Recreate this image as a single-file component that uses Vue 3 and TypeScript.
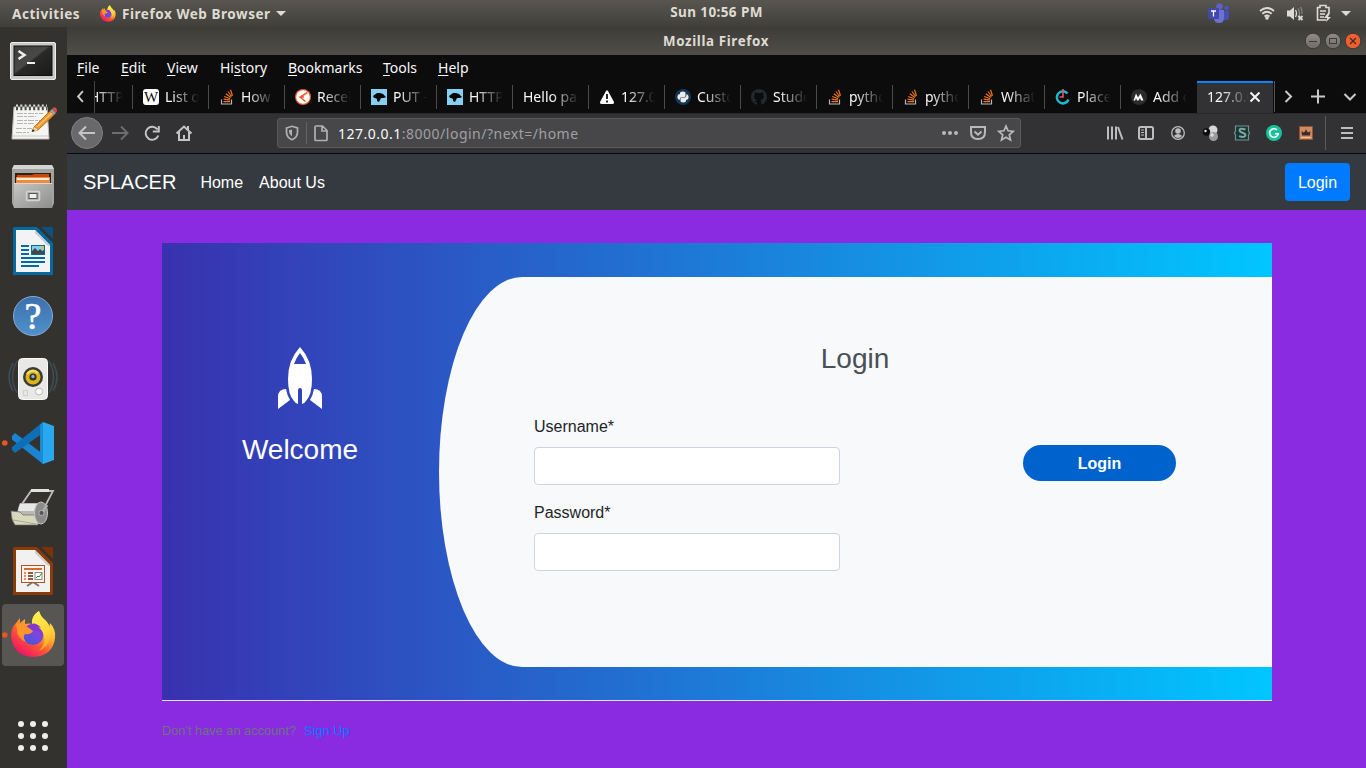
<script setup lang="ts">
import { ref } from 'vue'

interface MenuEntry { pre: string; key: string; post: string; width: number }
interface BrowserTab { icon: string; label: string }

const menus: MenuEntry[] = [
  { pre: '', key: 'F', post: 'ile', width: 44 },
  { pre: '', key: 'E', post: 'dit', width: 46 },
  { pre: '', key: 'V', post: 'iew', width: 53 },
  { pre: 'Hi', key: 's', post: 'tory', width: 68 },
  { pre: '', key: 'B', post: 'ookmarks', width: 95 },
  { pre: '', key: 'T', post: 'ools', width: 55 },
  { pre: '', key: 'H', post: 'elp', width: 50 },
]

const tabs: BrowserTab[] = [
  { icon: 'mdn', label: 'HTTP' },
  { icon: 'wiki', label: 'List of' },
  { icon: 'stack', label: 'How t' },
  { icon: 'postman', label: 'Recei' },
  { icon: 'mdn', label: 'PUT - H' },
  { icon: 'mdn', label: 'HTTP' },
  { icon: '', label: 'Hello pag' },
  { icon: 'warn', label: '127.0.' },
  { icon: 'python', label: 'Custo' },
  { icon: 'github', label: 'Stude' },
  { icon: 'stack', label: 'python' },
  { icon: 'stack', label: 'python' },
  { icon: 'stack', label: 'What i' },
  { icon: 'clock', label: 'Place' },
  { icon: 'medium', label: 'Add c' },
]

const username = ref('')
const password = ref('')
</script>

<template>
  <div class="desktop">
    <header class="topbar">
      <span class="activities">Activities</span>
      <svg class="ff-small" viewBox="11 8 45 46"><use href="#firefox" /></svg>
      <span class="appname">Firefox Web Browser</span>
      <i class="caret"></i>
      <span class="clock">Sun 10:56 PM</span>
      <svg class="tray" width="158" height="27" viewBox="1208 0 158 27">
        <circle cx="1219.500" cy="6.500" r="3.300" fill="#5a62c3" />
        <circle cx="1226.500" cy="8" r="2.400" fill="#4b53bc" />
        <path d="M1223 11h6v6q0 3-3 3h-3z" fill="#4650b4" />
        <path d="M1214 10h10v8q0 5-5 5t-5-5z" fill="#6b72d0" />
        <rect x="1208" y="8" width="11" height="11" rx="1" fill="#4149ad" />
        <path d="M1211 11h5M1213.500 11v5.500" stroke="#fff" stroke-width="1.300" />
        <g fill="none" stroke="#dedbd5" stroke-width="1.800">
          <path d="M1260 11q7-6 14 0M1262.300 13.800q4.700-4 9.400 0M1264.500 16.500q2.500-2 5 0" />
          <path d="M1295.500 10q2 3 0 7" stroke-width="1.300" />
          <path d="M1298 8.500q3 4.500 0 9M1300.500 7q2 3.500 1.500 7" stroke-width="1.300" opacity=".4" />
          <path d="M1298.500 16l4 4m0-4l-4 4" stroke-width="1.800" />
        </g>
        <circle cx="1267" cy="18" r="1.800" fill="#dedbd5" />
        <path d="M1287 10.500h3l4-3.500v13l-4-3.500h-3z" fill="#dedbd5" />
        <path d="M1326 20h-8.500V7.500h2.500v-2h6v2h3V13M1320 11h6M1320 14h5M1320 17h4" fill="none" stroke="#dedbd5" stroke-width="1.600" />
        <path d="M1328 13l-4 5h3l-1 4 5-5h-3l2-4z" fill="#dedbd5" />
        <path d="M1341 11h10l-5 5z" fill="#dedbd5" />
      </svg>
    </header>

    <div class="workspace">
      <aside class="dock">
        <svg class="launcher" viewBox="0 0 67 64">
          <defs>
            <linearGradient id="screen" x1="0" y1="0" x2="1" y2="1"><stop offset="0" stop-color="#3d3e3b" /><stop offset=".45" stop-color="#494a48" /><stop offset=".5" stop-color="#292a28" /><stop offset="1" stop-color="#181918" /></linearGradient>
          </defs>
          <rect x="10.500" y="15.500" width="45" height="37" rx="1.500" fill="#c9c9c7" stroke="#ededeb" />
          <rect x="14" y="19" width="38" height="29.500" fill="url(#screen)" stroke="#111" />
          <path d="M18.500 24l6 4-6 4" fill="none" stroke="#eee" stroke-width="2.500" />
          <path d="M27 36h8" stroke="#eee" stroke-width="2" />
        </svg>

        <svg class="launcher" viewBox="0 0 67 64">
          <path d="M14 16h33l2 32H12z" fill="#f5f5f3" stroke="#bdbdb8" />
          <path d="M12.500 45h36" stroke="#c9c9c4" />
          <g stroke="#b5b5b2" stroke-width="1" stroke-dasharray="6 1 3 1"><path d="M17 22.500h26M17 25.500h19M17 29.500h23M17 32.500h17M16 37.500h16M16 41.500h13" /></g>
          <path d="M16 17.500h31" stroke="#4a4a48" stroke-width="3.500" stroke-dasharray="2 2.300" />
          <path d="M16 14.500h31" stroke="#dadad8" stroke-width="2" stroke-dasharray="2 2.300" />
          <path d="M34 36L50 20l4 4-16 15-6 1.500z" fill="#f0952a" stroke="#a85f14" stroke-width=".8" />
          <path d="M37 36l15-14" stroke="#ffc77a" stroke-width="1.200" />
          <path d="M34 36l4 3-6 2z" fill="#f1d5a5" /><path d="M33 38l1.600 2-2.900 1z" fill="#222" />
          <path d="M50 20l2-2 4 4-2 2z" fill="#9aa3a8" /><path d="M52 18q2-3 4-1t0 5z" fill="#e04848" />
        </svg>

        <svg class="launcher" viewBox="0 0 67 64">
          <defs><linearGradient id="cab" x2="1" y2="1"><stop stop-color="#c6c6c4" /><stop offset="1" stop-color="#8e8e8c" /></linearGradient></defs>
          <path d="M14 10h38l2 4v34l-2 5H14l-2-5V14z" fill="#a3a3a1" />
          <path d="M14 10h38l2 4H12z" fill="#d4d4d2" />
          <rect x="15" y="18" width="36" height="11" fill="#2a211c" />
          <path d="M17 20h15l2-1h15v8H17z" fill="#c64a0c" />
          <path d="M16 22h34v7H16z" fill="#f08a3e" /><path d="M17 24h32" stroke="#fff0dc" stroke-width="2" />
          <rect x="14" y="28" width="38" height="25" rx="1" fill="url(#cab)" />
          <path d="M14 28.500h38" stroke="#d8d8d6" />
          <rect x="26.500" y="36.500" width="13" height="9" rx="1" fill="#aaa" stroke="#d3d3d1" stroke-width="1.500" />
          <rect x="29" y="38.500" width="8" height="5" fill="#f0f0ee" stroke="#555" />
        </svg>

        <svg class="launcher" viewBox="0 0 67 64">
          <path d="M15 8h22l16 16v32H13V10q0-2 2-2z" fill="#0369a3" />
          <path d="M41 8h12v12z" fill="#0e5180" />
          <path d="M16 11h19l15 15v27H16z" fill="#f3f3f3" />
          <path d="M35 11v3l13 13h2v-1z" fill="#c5cdd2" />
          <path d="M21 27h8M21 31h8M21 35h8M21 39h24M21 43h24M21 47h18" stroke="#0369a3" stroke-width="2" />
          <rect x="31.500" y="26.500" width="13" height="9" fill="#87cdec" stroke="#0369a3" />
          <path d="M32 35v-3l3-3 3 3 2-2 2 2 2-1v4z" fill="#3c4b4d" /><circle cx="42.500" cy="28.500" r="1.500" fill="#e9bd32" />
        </svg>

        <svg class="launcher" viewBox="0 0 67 64">
          <defs><linearGradient id="help" x2="0" y2="1"><stop stop-color="#3c6fad" /><stop offset="1" stop-color="#4f92cb" /></linearGradient></defs>
          <circle cx="33" cy="33" r="19.500" fill="url(#help)" stroke="#86acd6" />
          <text x="33" y="46" class="question">?</text>
        </svg>

        <svg class="launcher" viewBox="0 0 67 64">
          <g fill="none" stroke="#3f4c5a" stroke-width="1.500"><path d="M17 14q-9 16 0 32M13 16q-8 14 0 28M49 14q9 16 0 32M53 16q8 14 0 28" /></g>
          <rect x="18.500" y="11.500" width="29" height="41" rx="4" fill="#e8e8e6" stroke="#fafaf9" />
          <circle cx="33" cy="30" r="10" fill="#3b3b36" /><circle cx="33" cy="30" r="7.500" fill="#d8b51e" />
          <path d="M27 27q5-6 11-1" stroke="#f4df62" stroke-width="2" fill="none" />
          <circle cx="33" cy="30" r="3.600" fill="#333" /><circle cx="33" cy="29.500" r="1.700" fill="#aaa" />
          <circle cx="39" cy="44.500" r="3.500" fill="#f9f9f9" stroke="#bbb" /><rect x="23.500" y="43.500" width="4" height="5" fill="none" stroke="#d0d0ce" />
        </svg>

        <svg class="launcher" viewBox="0 0 67 64">
          <circle cx="4.800" cy="32" r="2.800" fill="#e95420" />
          <path d="M12 25l3-3 28 21v10L12 28.500z" fill="#1b83cf" />
          <path d="M12 39l3 3 28-20V11L12 36z" fill="#0f6fb5" />
          <path d="M43 11l11 4v34l-11 4z" fill="#29a7f1" />
          <path d="M43 11v42l-3-3V14z" fill="#1b8bd5" />
        </svg>

        <svg class="launcher" viewBox="0 0 67 64">
          <path d="M22 29l9-13h22l-11 21" fill="none" stroke="#bcbcb8" stroke-width="1.800" />
          <path d="M31 15.500h18" stroke="#e1e1df" stroke-width="3" />
          <path d="M20 28h22l-2 21H21q-7-7-1-21z" fill="#b8b9b4" />
          <path d="M20 29h18l-4 7H18z" fill="#e7e7e5" />
          <path d="M11 36l9 1 3 3h15v10H15q-4-5-4-14z" fill="#d8d8bf" stroke="#6b6b5b" stroke-width=".7" />
          <path d="M13 45l23 4" stroke="#aaaa90" />
          <ellipse cx="41" cy="38" rx="6.500" ry="11" fill="#8b8c89" stroke="#c4c4c1" />
          <path d="M42 38l5-8" stroke="#aaa" stroke-width="3" /><circle cx="41.500" cy="38" r="2.600" fill="#575856" stroke="#ccc" stroke-width=".7" />
        </svg>

        <svg class="launcher" viewBox="0 0 67 64">
          <path d="M15 8h22l16 16v32H13V10q0-2 2-2z" fill="#8c3a08" />
          <path d="M41 8h12v12z" fill="#7b3206" />
          <path d="M16 11h19l15 15v27H16z" fill="#f1f1f1" />
          <path d="M35 11v3l13 13h2v-1z" fill="#d0c9c5" />
          <path d="M27 47l6-4 6 4" fill="none" stroke="#777" stroke-width="2" />
          <rect x="21.500" y="26.500" width="23" height="17" fill="#fff4ed" stroke="#b2541f" />
          <path d="M24 30h18" stroke="#d36c31" stroke-width="2" />
          <path d="M24 34h2M24 37h2M24 40h2" stroke="#d36c31" stroke-width="1.500" /><path d="M28 34h5M28 37h5M28 40h5" stroke="#6c2a08" stroke-width="1.500" />
          <rect x="35" y="33.500" width="7" height="7" fill="#fff" stroke="#888" /><path d="M36 39l2-2 1 1 3-4" stroke="#239333" fill="none" />
        </svg>

        <svg class="launcher" viewBox="0 0 67 64">
          <defs>
            <linearGradient id="flame" x1=".85" y1=".1" x2=".25" y2=".95"><stop stop-color="#fff04d" /><stop offset=".35" stop-color="#ffb62d" /><stop offset=".65" stop-color="#ff5634" /><stop offset="1" stop-color="#f01567" /></linearGradient>
            <linearGradient id="globe" x1=".8" y1="0" x2=".3" y2="1"><stop stop-color="#a438d8" /><stop offset=".6" stop-color="#6c4be0" /><stop offset="1" stop-color="#4658d2" /></linearGradient>
            <linearGradient id="tail" x1=".4" y1="0" x2=".6" y2="1"><stop stop-color="#fff250" /><stop offset=".6" stop-color="#ffd338" /><stop offset="1" stop-color="#ff9a25" /></linearGradient>
          </defs>
          <rect x="2" y="1" width="62" height="62" rx="4" fill="#575652" />
          <circle cx="4.800" cy="32" r="2.800" fill="#e95420" />
          <g id="firefox">
            <path d="M16 20l4-5v5l5-4v5q4-1 7 0-1-8 7-13 1 5 6 9 4 3 4 8l1-5q6 6 5 15-2 18-22 19-20-1-22-21 0-8 5-13z" fill="url(#flame)" />
            <circle cx="33" cy="31.500" r="10.500" fill="url(#globe)" />
            <path d="M39 8q1 5 6 9 7 7 6 17-2 9-12 14 7-7 5-15-2-9-12-11-1-9 7-14z" fill="url(#tail)" />
            <path d="M16 20q3 1 7 1 6 4 10 7-3 4-8 3-3 3 1 8-9-4-9-12 0-4-1-7z" fill="#ff962b" />
            <path d="M27 23q8-6 14 2l-3-1q5 4 5 9-3-6-10-6z" fill="#8339cd" />
          </g>
        </svg>

        <div class="apps"><i v-for="n in 9" :key="n"></i></div>
      </aside>

      <section class="window">
        <div class="titlebar">
          <span>Mozilla Firefox</span>
          <svg class="winctl" width="60" height="28" viewBox="1303 27 60 28">
            <defs><linearGradient id="btn" x2="0" y2="1"><stop stop-color="#8f8d84" /><stop offset="1" stop-color="#6d6b64" /></linearGradient></defs>
            <circle cx="1313" cy="41" r="7.800" fill="url(#btn)" stroke="#3a3935" /><circle cx="1333" cy="41" r="7.800" fill="url(#btn)" stroke="#3a3935" /><circle cx="1353" cy="41" r="7.800" fill="#ee5f32" stroke="#3a3935" />
            <path d="M1309 41.500h8" stroke="#3c3b37" /><rect x="1329.500" y="38.500" width="7" height="5" fill="none" stroke="#3c3b37" /><path d="M1350 38l6 6m0-6l-6 6" stroke="#4b2a1b" stroke-width="1.300" />
          </svg>
        </div>

        <nav class="menubar">
          <span v-for="m in menus" :key="m.post" :style="{ width: m.width + 'px' }">{{ m.pre }}<u>{{ m.key }}</u>{{ m.post }}</span>
        </nav>

        <div class="tabbar">
          <svg class="scroll-left" width="28" height="32" viewBox="67 81 28 32"><path d="M83.500 91l-5 5.500 5 5.500" fill="none" stroke="#c9c9cb" stroke-width="2" /></svg>
          <div class="tabs">
            <div v-for="(t, i) in tabs" :key="i" class="tab">
              <svg v-if="t.icon" width="16" height="16" viewBox="0 0 16 16">
                <g v-if="t.icon === 'mdn'"><rect width="16" height="16" fill="#83d0f2" /><path d="M2 7l2-1.500 2-1.500h3l3 1 3 3-2 1-3 0-1 2-1 2-2-1v-2l-2-1H3z" fill="#050505" /></g>
                <g v-else-if="t.icon === 'wiki'"><rect width="16" height="16" rx="3" fill="#fff" /><text x="8" y="13" class="wiki-w">W</text></g>
                <g v-else-if="t.icon === 'stack'" fill="none"><path d="M2.500 10.500v4.500h10v-4.500" stroke="#b4b7ba" stroke-width="1.200" /><path d="M4.500 12.700h6.500M4.600 10.200l6.400.9M5.200 7.500l6 2.200M6.800 4.700l5.200 3.800M9 2.500l3.700 5M11.500.7l2 6" stroke="#ef7320" stroke-width="1.200" /></g>
                <g v-else-if="t.icon === 'postman'"><circle cx="8" cy="8" r="8" fill="#f05c35" /><circle cx="8" cy="8" r="6.800" fill="#fff" /><path d="M12.500 3.500L5 8l5.500 4.500M5 8h4" fill="none" stroke="#ef5b34" stroke-width="1.500" /></g>
                <g v-else-if="t.icon === 'warn'"><path d="M7 2q1-1.500 2 0l6 11q.5 2-1.500 2H2.500Q.5 15 1 13z" fill="#fafafa" /><path d="M8 5v5M8 11.500v2" stroke="#111" stroke-width="1.800" /></g>
                <g v-else-if="t.icon === 'python'"><circle cx="8" cy="8" r="8" fill="#173650" /><path d="M5 5V3.500Q8 1.500 10.500 3.500V7q0 1-1 1H6.500q-1.500 0-2 3-2.500-1-2-4 .5-2 2.500-2zM11 11v1.500q-3 2-5.500 0V9.500q0-1 1-1h3q2 0 2-3.500 2.500 1 2 4-.5 2-2.500 2z" fill="#e8edf0" /></g>
                <g v-else-if="t.icon === 'github'"><circle cx="8" cy="8" r="8" fill="#24292e" /><path d="M4 3l2 1h4l2-1 .4 3q1.500 4-2.900 5 1 1 .5 5h-4v-3q-2 .5-3-1 2 .5 3-1-4-1-2.500-5z" fill="#0b0b0c" /></g>
                <g v-else-if="t.icon === 'clock'" fill="none"><path d="M12.500 4.500A6 6 0 1 0 13.500 10.500" stroke="#1db8d0" stroke-width="2.500" /><path d="M8 0v8H4.500" stroke="#e85368" stroke-width="1.600" /></g>
                <g v-else><circle cx="8" cy="8" r="8" fill="#2b2b2b" /><path d="M2.500 11.500L5 4.500l2 4 2.500-4 3 7H10L9 9l-1.500 2.500H6L5 9l-.8 2.500z" fill="#fff" /></g>
              </svg>
              <span>{{ t.label }}</span>
            </div>
            <div class="tab active"><span>127.0.0</span>
              <svg width="12" height="12" viewBox="0 0 12 12"><path d="M1.500 1.500l9 9m0-9l-9 9" stroke="#f5f5f5" stroke-width="2" /></svg>
            </div>
          </div>
          <svg class="tab-tools" width="92" height="32" viewBox="1274 81 92 32"><path d="M1274.500 81v31" stroke="#555" /><path d="M1285.500 91l5.500 5.500-5.500 5.500M1318 89.500v14M1311 96.500h14M1344.500 94l5.500 5.500 5.500-5.500" fill="none" stroke="#c9c9cb" stroke-width="2" /></svg>
        </div>

        <div class="toolbar">
          <svg width="134" height="40" viewBox="67 113 134 40" fill="none" stroke="#c4c4c6" stroke-width="2">
            <circle cx="87" cy="133" r="15.500" fill="#69696b" stroke="#818183" stroke-width="1" />
            <path d="M95 133H80M86 126.500L79.500 133l6.500 6.500" />
            <path d="M112 133h15M121 126.500l6.500 6.500-6.500 6.500" stroke="#6d6d70" />
            <path d="M157.500 129.500a6.500 6.500 0 1 0 .8 6M158.800 126v5.500h-6" />
            <path d="M176.500 133.500l7.500-7 7.500 7M179 132v8h10v-8M184 140v-5" />
            <path d="M188 126v4" />
          </svg>
          <div class="urlbar">
            <svg width="55" height="28" viewBox="278 119 55 28" fill="none" stroke="#b1b1b3" stroke-width="1.700">
              <path d="M286.500 128l5.500-1.700 5.500 1.700v4q0 5.500-5.500 7.700-5.500-2.200-5.500-7.700z" /><path d="M292 129.500v7q-3-2-3-5v-1.200z" fill="#b1b1b3" stroke="none" />
              <path d="M306.500 122v22" stroke="#646466" stroke-width="1" />
              <path d="M316 126h6.500l4.500 4.500v9q0 1-1 1h-10q-1 0-1-1V127q0-1 1-1zM322 126.500v4.500h5" />
            </svg>
            <span class="url"><b>127.0.0.1</b>:8000/login/?next=/home</span>
            <svg class="url-tools" width="86" height="28" viewBox="935 119 86 28" fill="none" stroke="#b9b9bb" stroke-width="2">
              <g fill="#b9b9bb" stroke="none"><circle cx="944" cy="133" r="2" /><circle cx="950" cy="133" r="2" /><circle cx="956" cy="133" r="2" /></g>
              <path d="M971 127h14v5q0 7-7 7t-7-7z" /><path d="M974.500 131.500l3.500 3.200 3.500-3.200" />
              <path d="M1006 126l2.100 4.800 5.100.5-3.900 3.500 1.200 5.200-4.500-2.800-4.500 2.800 1.200-5.200-3.900-3.500 5.100-.5z" stroke-width="1.700" />
            </svg>
          </div>
          <svg class="extensions" width="268" height="40" viewBox="1098 113 268 40" fill="none" stroke="#bdbdbf" stroke-width="2">
            <path d="M1108 126.500v13M1112 126.500v13M1116 126.500v13M1118 127l4.500 12.500" />
            <rect x="1139" y="127" width="14" height="12" rx="1.500" /><path d="M1146 127v12" /><path d="M1141 130h3M1141 132.500h3M1141 135h3" stroke-width="1" />
            <circle cx="1178" cy="133" r="6.300" stroke-width="1.300" /><circle cx="1178" cy="131" r="2.800" fill="#bdbdbf" stroke="none" /><path d="M1173.800 136q4.200-4 8.400 0-4.200 4-8.400 0z" fill="#bdbdbf" stroke="none" />
            <g stroke="none"><circle cx="1213" cy="130" r="4.500" fill="#d7d7d7" /><circle cx="1206.500" cy="132" r="3.700" fill="#0c0c0c" /><circle cx="1205.500" cy="131" r="1.200" fill="#eee" /><circle cx="1213.500" cy="136.500" r="4.500" fill="#9b9b9b" /><circle cx="1212" cy="135" r="1.800" fill="#ddd" /></g>
            <path d="M1235.500 126h13v5l1 2-1 2v5h-13v-5l-1-2 1-2z" fill="#183635" stroke="#6f9390" stroke-width="1.200" /><path d="M1245.500 129.500q-6-2-6 .8c0 3 6 2 6 4.800q0 3-6.500 1" stroke="#84a5a2" />
            <circle cx="1274" cy="133" r="8" fill="#15c39a" stroke="none" /><path d="M1277 130a4.300 4.300 0 1 0 1.200 3.800h-3.400" stroke="#fff" stroke-width="1.600" />
            <rect x="1299.500" y="126.500" width="13" height="13" fill="#d18b60" stroke="#925332" stroke-width="1" /><path d="M1301.500 131l2 1.500 1.500-1 1-2.500 1 2.500 1.500 1 2-1.500-.5 4.500h-8z" fill="#3e2a26" stroke="none" /><path d="M1301 137.500h10" stroke="#f1c39c" stroke-width="1" />
            <path d="M1325.500 116v34" stroke="#5b5b5e" stroke-width="1" /><path d="M1341 128h12M1341 133h12M1341 138h12" />
          </svg>
        </div>

        <div class="page">
          <nav class="site-nav">
            <a class="brand">SPLACER</a><a>Home</a><a>About Us</a>
            <button class="nav-login">Login</button>
          </nav>
          <main>
            <div class="register">
              <div class="welcome">
                <svg width="44" height="62" viewBox="0 0 44 62" fill="#fff">
                  <path fill-rule="evenodd" d="M22 0Q34 13 34 32q0 16-6 22-2 3-4 3V43q0-2-2-2t-2 2v14q-2 0-4-3-6-6-6-22Q10 13 22 0zM22 6q-4 5-6 11h12Q26 11 22 6z" />
                  <path d="M8 42Q0 42 0 50v12l12-9Q9 48 8 42zM36 42q8 0 8 8v12l-12-9q3-5 4-11z" />
                </svg>
                <h3>Welcome</h3>
              </div>
              <div class="panel">
                <h3>Login</h3>
                <form class="fields" @submit.prevent>
                  <div class="inputs">
                    <label for="user">Username*</label>
                    <input id="user" v-model="username" type="text" />
                    <label for="pass">Password*</label>
                    <input id="pass" v-model="password" type="password" />
                  </div>
                  <button class="submit">Login</button>
                </form>
              </div>
            </div>
            <p class="signup">Don't have an account?<a>Sign Up</a></p>
          </main>
        </div>
      </section>
    </div>
  </div>
</template>

<style>
body { margin: 0; overflow: hidden; }
</style>

<style scoped>
* { box-sizing: border-box; }
svg { display: block; flex: none; }
.desktop { width: 1366px; height: 768px; display: flex; flex-direction: column; overflow: hidden; font-family: "Noto Sans", "Open Sans", sans-serif; font-size: 14px; }
.topbar { position: relative; height: 27px; display: flex; align-items: center; padding-left: 12px; background: linear-gradient(#58564f, #403f3a); color: #dfdbd2; font-weight: 700; font-size: 13.5px; letter-spacing: .55px; white-space: nowrap; }
.activities { width: 88px; }
.ff-small { width: 16px; height: 17px; margin-bottom: 1px; }
.appname { margin-left: 6px; width: 149px; }
.caret { border: 5px solid transparent; border-top-color: #dfdbd2; border-bottom: 0; margin-left: 5px; }
.clock { position: absolute; left: 0; right: 0; top: 3px; text-align: center; padding-left: 67px; letter-spacing: .4px; }
.tray { margin-left: auto; }
.workspace { flex: 1; min-height: 0; display: flex; }
.dock { width: 67px; background: #33322e; display: flex; flex-direction: column; }
.launcher { width: 67px; height: 64px; }
.question { font: 400 38px "Liberation Serif", serif; fill: #fff; stroke: #fff; stroke-width: .6px; text-anchor: middle; }
.apps { margin: 54px 0 0 18px; display: grid; grid-template-columns: repeat(3, 6px); gap: 6px; }
.apps i { width: 6px; height: 6px; border-radius: 50%; background: #eeeeec; }
.window { flex: 1; min-width: 0; display: flex; flex-direction: column; }
.titlebar { height: 28px; display: grid; grid-template-columns: 60px 1fr 60px; align-items: center; padding-right: 3px; background: linear-gradient(#3d3c38, #4f4e48); color: #dfdbd2; font-weight: 700; font-size: 13.3px; letter-spacing: .65px; }
.titlebar span { grid-column: 2; text-align: center; padding-left: 2px; }
.menubar { height: 26px; padding: 0 0 2px 10px; display: flex; align-items: center; background: #0c0c0d; color: #f9f9fa; white-space: nowrap; }
.menubar u { text-underline-offset: 2px; text-decoration-thickness: 1px; }
.tabbar { height: 32px; display: flex; background: #0c0c0d; }
.scroll-left { border-right: 1px solid #444; }
.tabs { width: 1178px; margin-right: 1px; overflow: hidden; display: flex; justify-content: flex-end; }
.tab { width: 76px; flex: none; padding: 0 10px; display: flex; align-items: center; color: #f9f9fa; background: linear-gradient(#4b4b4d, #4b4b4d) right 4px / 1px 24px no-repeat; }
.tab span { flex: 1; min-width: 0; overflow: hidden; white-space: nowrap; padding-bottom: 2px; -webkit-mask-image: linear-gradient(to right, #000 calc(100% - 28px), transparent); mask-image: linear-gradient(to right, #000 calc(100% - 28px), transparent); }
.tab svg + span { margin-left: 6px; }
.tab:nth-last-child(2) { background: none; }
.tab.active { background: #323234; border-top: 2px solid #0a84ff; padding: 0 12px 2px 10px; height: 32px; }
.wiki-w { font: 15px "Liberation Serif", serif; text-anchor: middle; fill: #111; }
.toolbar { height: 41px; display: flex; background: #323234; border-bottom: 1px solid #0c0c0d; box-shadow: inset 0 1px #29292b; }
.urlbar { margin: 5px 0 0 76px; width: 744px; height: 30px; display: flex; align-items: center; background: #474749; border: 1px solid #5b5b5e; border-radius: 3px; }
.url { font-size: 14px; color: #a0a0a2; margin-left: 5px; letter-spacing: .5px; }
.url b { color: #f9f9fa; font-weight: 400; }
.url-tools { margin-left: auto; margin-right: -1px; }
.extensions { margin-left: auto; }
.page { flex: 1; min-height: 0; background: #8a2be2; font-family: "Liberation Sans", Arial, sans-serif; font-size: 16px; line-height: 24px; }
.site-nav { height: 56px; display: flex; align-items: center; gap: 16px; padding: 0 16px; background: #343a40; color: #fff; }
.site-nav a { padding-top: 2px; }
.site-nav .brand { font-size: 20px; margin-right: 8px; padding-top: 0; }
.nav-login { margin-left: auto; width: 65px; height: 38px; padding: 2px 0 0; border: 0; border-radius: 4px; background: #007bff; color: #fff; font: inherit; }
main { padding: 33px 94px 0 95px; }
.register { height: 458px; display: flex; padding: 34px 0 33px; background: linear-gradient(to right, #3931af, #00c6ff); border-bottom: 1px solid #dee2e6; }
.welcome { width: 276px; margin-right: 1px; padding-top: 70px; display: flex; flex-direction: column; align-items: center; color: #fff; }
h3 { margin: 0; font-weight: 400; font-size: 28px; line-height: 34px; }
.welcome h3 { margin-top: 24px; }
.panel { flex: 1; background: #f8f9fa; border-top-left-radius: 83px 195px; border-bottom-left-radius: 83px 195px; padding: 65px 96px 0 95px; }
.panel h3 { text-align: center; color: #495057; }
.fields { margin-top: 39px; display: flex; justify-content: space-between; }
.inputs { width: 306px; display: flex; flex-direction: column; color: #212529; }
.inputs input { height: 38px; margin: 8px 0 16px; border: 1px solid #ced4da; border-radius: 4px; background: #fff; padding: 6px 12px; font: inherit; outline: none; }
.submit { width: 153px; height: 36px; margin-top: 30px; padding: 2px 0 0; border: 0; border-radius: 24px; background: #0062cc; color: #fff; font: 700 16px "Liberation Sans", Arial, sans-serif; }
.signup { margin: 18px 0 0; font-size: 12.8px; color: #6c757d; }
.signup a { color: #007bff; margin-left: 8px; }
</style>
